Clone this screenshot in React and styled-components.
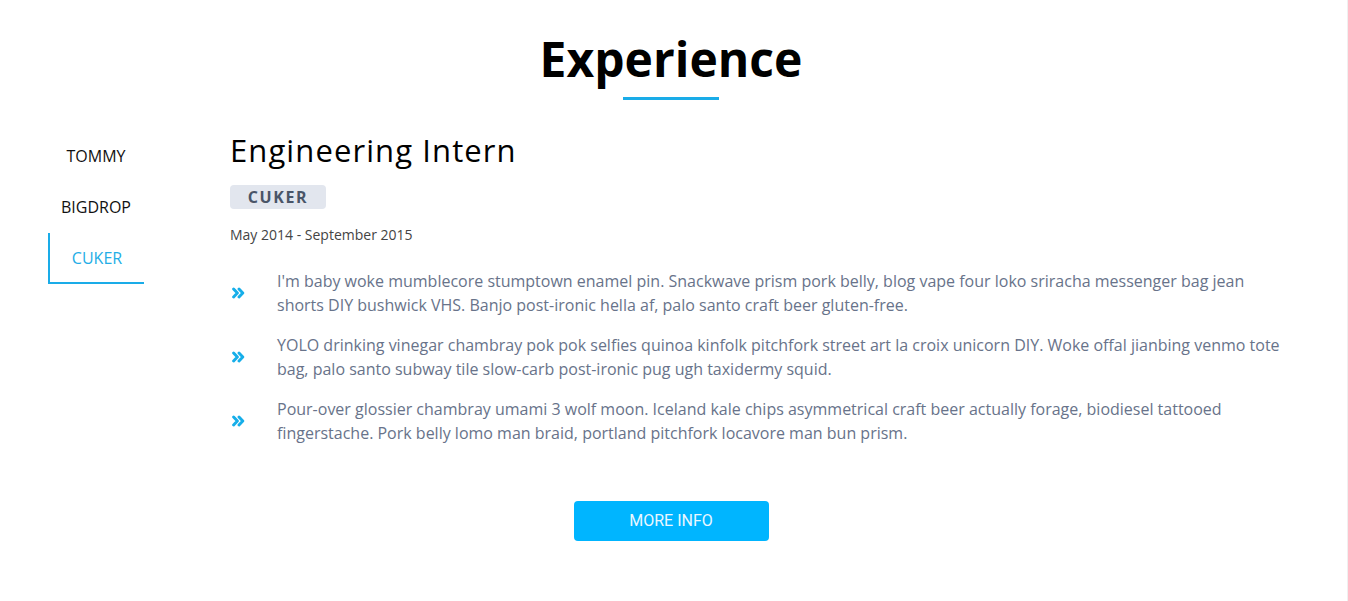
import React, { useState } from "react";
import styled, { createGlobalStyle } from "styled-components";

const Global = createGlobalStyle`
  html, body { margin: 0; padding: 0; background: #fff; }
  body { font-family: "Open Sans", "Liberation Sans", sans-serif; }
`;

const Page = styled.div`
  width: 1348px;
  min-height: 601px;
  box-sizing: border-box;
  padding: 30px 5px 60px 0;
  border-right: 1px solid #f0f0f0;
`;

const Header = styled.header`
  display: flex;
  flex-direction: column;
  align-items: center;
`;

const Title = styled.h2`
  margin: 0;
  font-family: "Open Sans", sans-serif;
  font-weight: 700;
  font-size: 48px;
  line-height: 58px;
  color: #000;
`;

const Underline = styled.div`
  width: 96px;
  height: 3px;
  margin-top: 9px;
  background: #1aace8;
`;

const Body = styled.div`
  display: flex;
  align-items: flex-start;
  padding-left: 48px;
  margin-top: 32px;
`;

const Nav = styled.nav`
  width: 96px;
  display: flex;
  flex-direction: column;
  margin-right: 86px;
`;

const NavItem = styled.button`
  all: unset;
  cursor: pointer;
  width: 96px;
  height: ${(p) => (p.$first ? "50px" : "51px")};
  box-sizing: border-box;
  display: flex;
  align-items: center;
  justify-content: center;
  font-family: "Open Sans", sans-serif;
  font-size: 16px;
  color: ${(p) => (p.$active ? "#23ade6" : "#111")};
  border-left: ${(p) => (p.$active ? "2px solid #1aace8" : "0")};
  border-bottom: 2px solid ${(p) => (p.$active ? "#1aace8" : "transparent")};
`;

const Main = styled.div`
  width: 1060px;
  display: flex;
  flex-direction: column;
  align-items: flex-start;
`;

const JobTitle = styled.h3`
  margin: 0;
  font-family: "Open Sans", sans-serif;
  font-weight: 400;
  font-size: 31px;
  line-height: 36px;
  letter-spacing: 1.1px;
  color: #000;
`;

const Badge = styled.span`
  margin-top: 17px;
  width: 96px;
  height: 24px;
  display: flex;
  align-items: center;
  justify-content: center;
  border-radius: 4px;
  background: #e2e6ee;
  color: #4a5568;
  font-family: "Open Sans", sans-serif;
  font-weight: 700;
  font-size: 16px;
  letter-spacing: 1.6px;
`;

const Dates = styled.p`
  margin: 15px 0 0;
  font-family: "Open Sans", sans-serif;
  font-size: 14px;
  line-height: 21px;
  color: #444;
`;

const List = styled.ul`
  list-style: none;
  margin: 24px 0 0;
  padding: 0;
  display: flex;
  flex-direction: column;
  gap: 16px;
`;

const Item = styled.li`
  display: flex;
  align-items: center;
`;

const Bullet = styled.span`
  width: 47px;
  flex: none;
  display: flex;
  align-items: center;
  color: #16aee9;
  padding-left: 2px;
  box-sizing: border-box;
`;

const Text = styled.p`
  margin: 0;
  width: 1010px;
  font-family: "Open Sans", sans-serif;
  font-size: 16px;
  line-height: 24px;
  color: #68738a;
`;

const Footer = styled.div`
  display: flex;
  justify-content: center;
  margin-top: 56px;
`;

const Button = styled.button`
  width: 195px;
  height: 40px;
  border: none;
  border-radius: 4px;
  background: #00b5ff;
  color: #eaf7ff;
  font-family: Roboto, "Open Sans", sans-serif;
  font-size: 16px;
  line-height: 39px;
  padding: 0 0 1px;
  cursor: pointer;
`;

const Chevrons = () => (
  <svg width="13" height="12" viewBox="0 0 13 12" aria-hidden="true">
    <path
      d="M1.6 2 L5.4 6 L1.6 10 M7 2 L10.8 6 L7 10"
      fill="none"
      stroke="currentColor"
      strokeWidth="2.9"
      strokeLinecap="round"
      strokeLinejoin="round"
    />
  </svg>
);

const companies = ["TOMMY", "BIGDROP", "CUKER"];

const duties = [
  "I'm baby woke mumblecore stumptown enamel pin. Snackwave prism pork belly, blog vape four loko sriracha messenger bag jean shorts DIY bushwick VHS. Banjo post-ironic hella af, palo santo craft beer gluten-free.",
  "YOLO drinking vinegar chambray pok pok selfies quinoa kinfolk pitchfork street art la croix unicorn DIY. Woke offal jianbing venmo tote bag, palo santo subway tile slow-carb post-ironic pug ugh taxidermy squid.",
  "Pour-over glossier chambray umami 3 wolf moon. Iceland kale chips asymmetrical craft beer actually forage, biodiesel tattooed fingerstache. Pork belly lomo man braid, portland pitchfork locavore man bun prism.",
];

export default function App() {
  const [active, setActive] = useState(2);
  return (
    <>
      <Global />
      <Page>
        <Header>
          <Title>Experience</Title>
          <Underline />
        </Header>
        <Body>
          <Nav>
            {companies.map((c, i) => (
              <NavItem
                key={c}
                $first={i === 0}
                $active={i === active}
                onClick={() => setActive(i)}
              >
                {c}
              </NavItem>
            ))}
          </Nav>
          <Main>
            <JobTitle>Engineering Intern</JobTitle>
            <Badge>CUKER</Badge>
            <Dates>May 2014 - September 2015</Dates>
            <List>
              {duties.map((d) => (
                <Item key={d}>
                  <Bullet>
                    <Chevrons />
                  </Bullet>
                  <Text>{d}</Text>
                </Item>
              ))}
            </List>
          </Main>
        </Body>
        <Footer>
          <Button>MORE INFO</Button>
        </Footer>
      </Page>
    </>
  );
}
